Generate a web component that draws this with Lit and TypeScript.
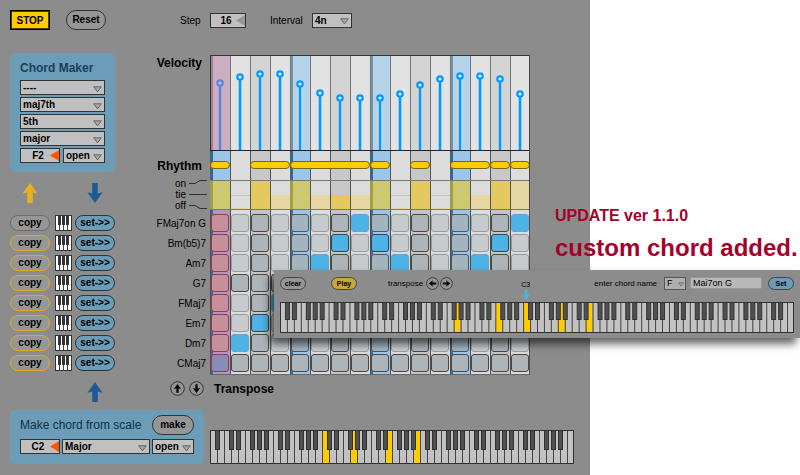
import { LitElement, html, svg, css } from "lit";
import { customElement, property } from "lit/decorators.js";
import { classMap } from "lit/directives/class-map.js";

const sharedControls = css`
  * {
    box-sizing: border-box;
  }
  button,
  input,
  select {
    font-family: inherit;
    margin: 0;
    color: #000;
  }
  button {
    padding: 0;
    cursor: pointer;
  }
  svg {
    display: block;
  }
`;

/* ---------- piano keyboard ---------- */

@customElement("piano-keys")
export class PianoKeys extends LitElement {
  @property({ type: Number }) count = 52;
  /* 0 = C, 1 = D ... 5 = A: the note of the leftmost white key */
  @property({ type: Number }) first = 5;
  @property({ attribute: false }) held: number[] = [];
  @property({ type: Number }) tall = 34;

  static styles = css`
    :host {
      display: block;
    }
    svg {
      display: block;
      width: 100%;
    }
    .white {
      fill: #c2c2c2;
    }
    .held {
      fill: #ffcc00;
    }
    .line {
      fill: #444;
    }
    .black {
      fill: #505050;
      stroke: #333;
    }
    .frame {
      fill: none;
      stroke: #303030;
    }
  `;

  render() {
    const total = this.count * 7;
    const keys = Array.from({ length: this.count }, (_, i) => i);
    const blackHeight = Math.round(this.tall * 0.56);
    return html`<svg
      role="img"
      aria-label="Keyboard"
      height=${this.tall}
      viewBox="0 0 ${total} ${this.tall}"
      preserveAspectRatio="none"
    >
      ${keys.map(
        (i) => svg`<rect class=${this.held.includes(i) ? "held" : "white"}
          x=${i * 7} y="0" width="7" height=${this.tall}></rect>
          <rect class="line" x=${i * 7} y="0" width="1" height=${this.tall}></rect>`
      )}
      ${keys
        .filter((i) => i < this.count - 1 && [0, 1, 3, 4, 5].includes((i + this.first) % 7))
        .map(
          (i) => svg`<rect class="black" x=${i * 7 + 5.5} y="0.5" width="4"
            height=${blackHeight}></rect>`
        )}
      <rect class="frame" x="0.5" y="0.5" width=${total - 1} height=${this.tall - 1}></rect>
    </svg>`;
  }
}

/* ---------- drop-down and value box ---------- */

@customElement("pick-list")
export class PickList extends LitElement {
  @property() label = "";
  @property() value = "";
  @property({ type: Boolean, reflect: true }) small = false;

  static styles = [
    sharedControls,
    css`
      :host {
        display: block;
      }
      .box {
        display: grid;
        height: 15px;
        align-items: center;
        justify-items: end;
      }
      select,
      svg {
        grid-area: 1 / 1;
      }
      select {
        appearance: none;
        width: 100%;
        height: 15px;
        padding: 0 0 0 2px;
        border: 1px solid #333;
        border-radius: 0;
        background: #c0c0c0;
        font-size: 10px;
        font-weight: bold;
        line-height: 13px;
      }
      svg {
        margin-right: 3px;
        margin-top: 3px;
        pointer-events: none;
      }
      :host([small]) .box,
      :host([small]) select {
        height: 13px;
      }
      :host([small]) select {
        font-size: 9px;
        font-weight: normal;
        line-height: 11px;
        border-color: #555;
        background: #b0b0b0;
      }
      :host([small]) svg {
        width: 6px;
        height: 5px;
        margin-right: 2px;
      }
    `,
  ];

  render() {
    return html`<div class="box">
      <select aria-label=${this.label}>
        <option>${this.value}</option>
      </select>
      <svg width="9" height="7" viewBox="0 0 9 7" aria-hidden="true">
        <path d="M0.7 0.8H8.3L4.5 5.9Z" fill="#a4a4a4" stroke="#666" />
      </svg>
    </div>`;
  }
}

@customElement("value-box")
export class ValueBox extends LitElement {
  @property() label = "";
  @property() value = "";
  @property() mark = "#ff5500";

  static styles = [
    sharedControls,
    css`
      :host {
        display: block;
      }
      .box {
        display: grid;
        align-items: center;
        justify-items: end;
      }
      input,
      svg {
        grid-area: 1 / 1;
      }
      input {
        width: 100%;
        height: 15px;
        padding: 0 4px 0 0;
        border: 1px solid #333;
        background: #c0c0c0;
        font-size: 10px;
        font-weight: bold;
        text-align: center;
      }
      svg {
        margin-right: 1px;
        pointer-events: none;
      }
    `,
  ];

  render() {
    return html`<div class="box">
      <input type="text" aria-label=${this.label} .value=${this.value} />
      <svg width="9" height="11" viewBox="0 0 9 11" aria-hidden="true">
        <path d="M9 0V11L0 5.5Z" fill=${this.mark} />
      </svg>
    </div>`;
  }
}

/* ---------- step sequencer ---------- */

const levels = [83, 77, 74, 74, 84, 93, 98, 98, 98, 94, 85, 79, 76, 76, 79, 94];
const gates = [
  "on", "off", "on", "tie", "on", "tie", "tie", "tie",
  "on", "off", "on", "off", "on", "tie", "on", "on",
];
/* first step and length of every sounding note */
const notes = [[0, 1], [2, 2], [4, 4], [8, 1], [10, 1], [12, 2], [14, 1], [15, 1]];
/* the chord row picked at each step */
const picks = [7, 6, 5, 4, 3, 2, 1, 0, 1, 2, 3, 4, 3, 2, 1, 0];
const steps = levels.map((_, i) => i);
const kindOf = (i: number) => (i % 4 === 0 ? "beat" : i % 2 === 0 ? "half" : "plain");

@customElement("step-grid")
export class StepGrid extends LitElement {
  static styles = [
    sharedControls,
    css`
      :host {
        display: block;
      }
      .v-plain { fill: #e2e2e2; }
      .v-half { fill: #d4d4d4; }
      .v-beat { fill: #b5d3e9; }
      .v-now { fill: #cdadc2; }
      .r-plain { fill: #dcdcdc; }
      .r-half { fill: #c8c8c8; }
      .r-beat { fill: #9bc6e8; }
      .g-plain { fill: #e5d6a2; }
      .g-half { fill: #e4c860; }
      .g-beat { fill: #ccc970; }
      .columns {
        display: grid;
        grid-template-columns: repeat(16, 20px);
        border-bottom: 1px solid #666;
      }
      .column {
        display: grid;
        gap: 2px;
        justify-items: end;
        padding: 4px 1px 2px 0;
        border-left: 1px solid #505050;
        background: #dcdcdc;
      }
      .column:last-child {
        border-right: 1px solid #505050;
        padding-right: 0;
      }
      .half { background: #c8c4c4; }
      .beat {
        background: linear-gradient(90deg, #3a6b96 2px, #9bc6e8 2px);
      }
      .now {
        background: linear-gradient(90deg, #3a6b96 2px, #b695bd 2px);
      }
      .cell {
        appearance: none;
        width: 18px;
        height: 18px;
        margin: 0;
        border: 1px solid #969da1;
        border-radius: 3px;
        background: #c7cbce;
      }
      .beat .cell {
        background: #a3b4c1;
        border-color: #4c5760;
      }
      .half .cell,
      .cell.strong {
        background: #adb4ba;
        border-color: #484848;
      }
      .cell:checked {
        background: #4db2e6;
        border-color: #62a8cc;
      }
      .half .cell:checked,
      .beat .cell:checked {
        background: #4db2e6;
        border-color: #38444c;
      }
      .now .cell {
        background: #c58f9c;
        border-color: #8c4058;
      }
      .now .cell:checked {
        background: #8a8cb8;
        border-color: #8c4058;
      }
    `,
  ];

  private lanes() {
    return html`<svg width="320" height="155" viewBox="0 55 320 155" role="img" aria-label="Velocity and rhythm">
      ${steps.map((i) => {
        const kind = kindOf(i);
        const x = i * 20;
        const gateTop = gates[i] === "on" ? 181 : gates[i] === "tie" ? 195 : 208;
        return svg`
          <rect class=${i === 0 ? "v-now" : "v-" + kind} x=${x} y="55" width="20" height="96"></rect>
          <rect class=${"r-" + kind} x=${x} y="151" width="20" height="59"></rect>
          <rect x=${x} y="195" width="20" height="1" fill="#c4c4c4"></rect>
          <rect class=${"g-" + kind} x=${x} y=${gateTop} width="20" height=${209 - gateTop}></rect>
          ${kind === "beat"
            ? svg`<rect x=${x + 1} y="55" width="2" height="96" fill=${i ? "#7393ab" : "#9b7f94"}></rect>
                <rect x=${x} y="151" width="3" height="30" fill="#3a6788"></rect>
                <rect x=${x} y="181" width="3" height="28" fill="#a39f45"></rect>`
            : svg`<rect x=${x} y="151" width="1" height="58" fill="#555"></rect>`}
          <rect x=${x} y="55" width="1" height="96" fill="#777"></rect>`;
      })}
      ${levels.map(
        (y, i) => svg`
          <rect x=${i * 20 + 8} y=${y + 4} width="4" height=${150 - y - 4} fill=${i ? "#9fd0f2" : "#b2a2cf"}></rect>
          <rect x=${i * 20 + 9} y=${y + 3} width="2" height=${150 - y - 3} fill=${i ? "#0099ff" : "#5b85d8"}></rect>
          <circle cx=${i * 20 + 10} cy=${y} r="2.7" fill=${i ? "#e8f4fc" : "#d3b8d8"}
            stroke=${i ? "#0099ff" : "#5b85d8"} stroke-width="2.2"></circle>`
      )}
      ${notes.map(
        ([start, length]) => svg`<rect x=${start * 20 + 0.5} y="161.5" width=${length * 20 - 1}
          height="7" rx="3.5" fill="#ffcc00" stroke="#77641c"></rect>`
      )}
      <rect x="0" y="55" width="320" height="1" fill="#333"></rect>
      <rect x="0" y="55" width="1" height="96" fill="#333"></rect>
      <rect x="0" y="150" width="320" height="1" fill="#222"></rect>
      <rect x="0" y="180" width="320" height="1" fill="#777"></rect>
      <rect x="0" y="209" width="320" height="1" fill="#777"></rect>
      <rect x="319" y="55" width="1" height="155" fill="#444"></rect>
    </svg>`;
  }

  render() {
    return html`${this.lanes()}
      <div class="columns">
        ${steps.map(
          (i) => html`<div class=${classMap({ column: true, [kindOf(i)]: i > 0, now: i === 0 })}>
            ${steps.slice(0, 8).map(
              (row) => html`<input
                type="checkbox"
                class=${classMap({ cell: true, strong: row === 3 || row === 7 })}
                aria-label="Step ${i + 1}, chord ${row + 1}"
                ?checked=${picks[i] === row}
              />`
            )}
          </div>`
        )}
      </div>`;
  }
}

/* ---------- page ---------- */

const chords = ["FMaj7on G", "Bm(b5)7", "Am7", "G7", "FMaj7", "Em7", "Dm7", "CMaj7"];

const bigArrow = (fill: string, down = false) => html`<svg
  width="16" height="20" viewBox="0 0 16 20" aria-hidden="true">
  <path fill=${fill} d=${down
    ? "M5.2 0H10.8V10.5L15.6 9.2L8 20L0.4 9.2L5.2 10.5Z"
    : "M5.2 20H10.8V9.5L15.6 10.8L8 0L0.4 10.8L5.2 9.5Z"} />
</svg>`;

const roundArrow = (turn: number, size: number) => html`<svg
  width=${size} height=${size} viewBox="0 0 15 15" aria-hidden="true">
  <circle cx="7.5" cy="7.5" r="6.8" fill="#949494" stroke="#333" />
  <path transform="rotate(${turn} 7.5 7.5)" fill="#000"
    d="M6.4 11.8H8.6V7.2L11.3 8.2L7.5 3L3.7 8.2L6.4 7.2Z" />
</svg>`;

const miniKeys = html`<svg width="17" height="16" viewBox="0 0 17 16" aria-hidden="true">
  <rect x="0.5" y="0.5" width="16" height="15" fill="#fff" stroke="#333" />
  <path d="M4.5 1V15M8.5 1V15M12.5 1V15" stroke="#444" />
  <path d="M3 1H6V10H3ZM7 1H10V10H7ZM11 1H14V10H11Z" fill="#333" />
</svg>`;

@customElement("app-root")
export class AppRoot extends LitElement {
  static styles = [
    sharedControls,
    css`
      :host {
        display: block;
        font-family: "Liberation Sans", Arial, Helvetica, sans-serif;
        font-size: 10px;
        color: #000;
      }
      .app {
        position: relative;
        display: grid;
        grid-template-columns: 59fr 21fr;
        min-height: 100vh;
        background: #fff;
        overflow: hidden;
      }
      .panel {
        padding: 10px 0 11px 10px;
        background: #8c8c8c;
      }
      .toolbar {
        display: flex;
        align-items: center;
        height: 20px;
        margin-bottom: 23px;
      }
      .pill {
        height: 16px;
        border: 1px solid #333;
        border-radius: 10px;
        background: #969696;
        font-size: 10px;
        font-weight: bold;
        line-height: 12px;
      }
      .large {
        width: 40px;
        height: 20px;
      }
      .stop {
        width: 40px;
        height: 20px;
        margin-right: 16px;
        border: 1px solid #000;
        outline: 1px solid #4d3d00;
        outline-offset: -2px;
        background: #ffcc00;
        font-size: 10px;
        font-weight: bold;
      }
      .step {
        width: 30px;
        margin-left: 74px;
      }
      .step-value {
        width: 36px;
        margin-right: 24px;
      }
      .interval {
        width: 42px;
      }
      .interval-value {
        width: 40px;
      }
      .main {
        display: grid;
        grid-template-columns: 105px 95px 320px;
      }
      .card {
        border-radius: 5px;
        background: #6b9db8;
      }
      .maker {
        display: grid;
        gap: 2px;
        padding: 5px 10px 9px;
      }
      .card-title {
        margin: 0;
        height: 20px;
        font-size: 12px;
        line-height: 20px;
        color: #1c4058;
      }
      .pair {
        display: grid;
        grid-template-columns: 40px 42px;
        gap: 3px;
      }
      .arrows {
        display: flex;
        justify-content: space-between;
        padding: 11px 12px 10px;
      }
      .slot {
        display: grid;
        grid-template-columns: 42px 17px 40px;
        column-gap: 3px;
        align-items: center;
        height: 20px;
      }
      .copy {
        width: 40px;
        border-color: #e0ab20;
      }
      .copy.idle {
        border-color: #6c6c6c;
      }
      .set {
        background: #6b9db8;
      }
      .lane-title {
        margin: 0;
        padding-right: 8px;
        font-size: 12px;
        line-height: 20px;
        text-align: right;
      }
      .rhythm {
        margin-top: 83px;
      }
      .switches {
        display: flex;
        justify-content: flex-end;
        gap: 3px;
        margin: 2px 0 3px;
        line-height: 11px;
        text-align: right;
      }
      .chord {
        padding-right: 4px;
        line-height: 20px;
        text-align: right;
      }
      .grid {
        padding-top: 2px;
      }
      .under {
        display: flex;
        align-items: center;
        height: 35px;
        padding: 0 0 8px 77px;
      }
      .under-arrow {
        margin-top: 6px;
      }
      .turns {
        display: flex;
        gap: 4px;
        margin: 0 10px 0 67px;
      }
      .turn {
        border: 0;
        background: none;
      }
      .transpose {
        margin: 0;
        font-size: 12px;
      }
      .bottom {
        display: grid;
        grid-template-columns: 194px 364px;
        gap: 6px;
        align-items: end;
      }
      .scale {
        display: grid;
        grid-template-columns: 40px 88px 42px;
        gap: 4px 2px;
        padding: 5px 10px 10px;
      }
      .scale-title {
        grid-column: 1 / 3;
        margin: 0;
        font-size: 12px;
        font-weight: normal;
        line-height: 20px;
        color: #10303f;
        white-space: nowrap;
      }
      .make {
        height: 20px;
      }
      .news {
        position: absolute;
        left: 555px;
        top: 206px;
        color: #a6002a;
        font-weight: bold;
        white-space: nowrap;
      }
      .version {
        margin: 0 0 6px;
        font-size: 16px;
        line-height: 20px;
      }
      .feature {
        margin: 0;
        font-size: 24px;
        line-height: 32px;
      }
      .dialog {
        position: absolute;
        left: 274px;
        right: 0;
        top: 270px;
        padding: 6px 6px 5px;
        background: #8c8c8c;
        box-shadow: -4px 6px 8px rgba(0, 0, 0, 0.6);
      }
      .dialog-bar {
        display: flex;
        align-items: center;
        height: 26px;
        padding-bottom: 12px;
        font-size: 8px;
      }
      .tiny {
        width: 26px;
        height: 13px;
        border-color: #444;
        font-size: 7px;
        line-height: 9px;
      }
      .play {
        margin: 0 31px 0 25px;
        background: #c8a838;
      }
      .dialog-turns {
        display: flex;
        gap: 1px;
        margin: 0 68px 0 3px;
      }
      .middle {
        display: grid;
        justify-items: center;
        gap: 1px;
        margin-top: 14px;
        font-size: 7px;
        line-height: 8px;
      }
      .name-label {
        margin: 0 7px 0 auto;
      }
      .root {
        width: 22px;
      }
      .name {
        width: 72px;
        height: 12px;
        margin: 0 6px 0 4px;
        padding: 0 0 0 2px;
        border: 1px solid #999;
        border-radius: 2px;
        background: #b8b8b8;
        font-size: 9px;
      }
    `,
  ];

  render() {
    return html`<div class="app">
      <main class="panel">
        <div class="toolbar">
          <button class="stop">STOP</button>
          <button class="pill large">Reset</button>
          <span class="step">Step</span>
          <value-box class="step-value" label="Step" value="16" mark="#969696"></value-box>
          <span class="interval">Interval</span>
          <pick-list class="interval-value" label="Interval" value="4n"></pick-list>
        </div>

        <div class="main">
          <div>
            <section class="card maker">
              <h2 class="card-title">Chord Maker</h2>
              <pick-list label="Tension" value="----"></pick-list>
              <pick-list label="Seventh" value="maj7th"></pick-list>
              <pick-list label="Fifth" value="5th"></pick-list>
              <pick-list label="Third" value="major"></pick-list>
              <div class="pair">
                <value-box label="Root" value="F2"></value-box>
                <pick-list label="Voicing" value="open"></pick-list>
              </div>
            </section>
            <div class="arrows">${bigArrow("#e6b022")}${bigArrow("#1e5a94", true)}</div>
            ${chords.map(
              (_, i) => html`<div class="slot">
                <button class=${classMap({ pill: true, copy: true, idle: i === 0 })}>copy</button>
                ${miniKeys}
                <button class="pill set">set-&gt;&gt;</button>
              </div>`
            )}
          </div>

          <div>
            <h2 class="lane-title">Velocity</h2>
            <h2 class="lane-title rhythm">Rhythm</h2>
            <div class="switches">
              <div>
                <div>on</div>
                <div>tie</div>
                <div>off</div>
              </div>
              <svg width="21" height="33" viewBox="0 0 21 33" aria-hidden="true">
                <path fill="none" stroke="#333"
                  d="M0 5.5H6L11 2.5H18M0 16.5H18M0 27.5H6L11 30.5H18" />
              </svg>
            </div>
            ${chords.map((name) => html`<div class="chord">${name}</div>`)}
          </div>

          <step-grid class="grid"></step-grid>
        </div>

        <div class="under">
          <div class="under-arrow">${bigArrow("#1e5a94")}</div>
          <div class="turns">
            <button class="turn" aria-label="Transpose up">${roundArrow(0, 15)}</button>
            <button class="turn" aria-label="Transpose down">${roundArrow(180, 15)}</button>
          </div>
          <h2 class="transpose">Transpose</h2>
        </div>

        <div class="bottom">
          <section class="card scale">
            <h2 class="scale-title">Make chord from scale</h2>
            <button class="pill make">make</button>
            <value-box label="Key" value="C2"></value-box>
            <pick-list label="Scale" value="Major"></pick-list>
            <pick-list label="Voicing" value="open"></pick-list>
          </section>
          <piano-keys .held=${[16, 20, 25, 29]}></piano-keys>
        </div>
      </main>

      <div class="news">
        <p class="version">UPDATE ver 1.1.0</p>
        <p class="feature">custom chord added.</p>
      </div>

      <section class="dialog" aria-label="Custom chord">
        <div class="dialog-bar">
          <button class="pill tiny">clear</button>
          <button class="pill tiny play">Play</button>
          <span>transpose</span>
          <div class="dialog-turns">
            <button class="turn" aria-label="Transpose left">${roundArrow(-90, 13)}</button>
            <button class="turn" aria-label="Transpose right">${roundArrow(90, 13)}</button>
          </div>
          <div class="middle">
            C3
            <svg width="8" height="10" viewBox="0 0 8 10" aria-hidden="true">
              <path fill="#4db2e6" d="M2.6 0H5.4V5L7.8 4.4L4 10L0.2 4.4L2.6 5Z" />
            </svg>
          </div>
          <label class="name-label" for="chord-name">enter chord name</label>
          <pick-list class="root" small label="Chord root" value="F"></pick-list>
          <input class="name" id="chord-name" type="text" value="Mai7on G" />
          <button class="pill tiny set">Set</button>
        </div>
        <piano-keys count="74" first="0" tall="31" .held=${[25, 31, 35, 40, 44]}></piano-keys>
      </section>
    </div>`;
  }
}
